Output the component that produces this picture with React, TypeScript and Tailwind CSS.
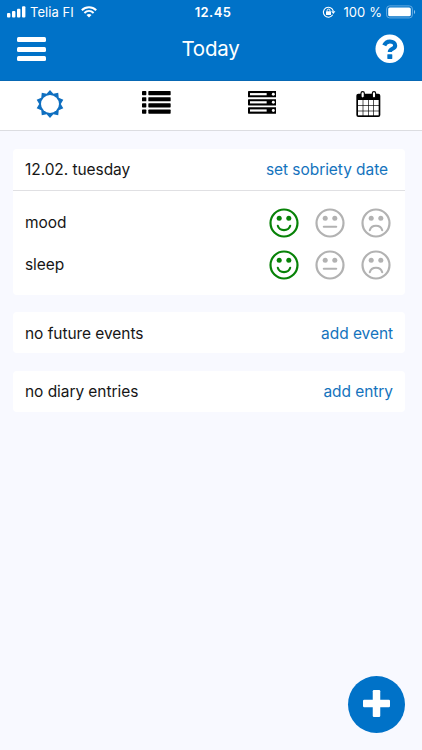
import React from "react";

type Mood = "happy" | "neutral" | "sad";

const mouths: Record<Mood, string> = {
  happy: "M-6.2 2.8C-4.6 8.6 4.6 8.6 6.2 2.8",
  neutral: "M-6.2 3.8H6.2",
  sad: "M-6.2 7.2C-4.6 1.2 4.6 1.2 6.2 7.2",
};

function Face({ mood, active }: { mood: Mood; active?: boolean }) {
  return (
    <svg viewBox="-15 -15 30 30" className={`size-[30px] ${active ? "text-[#078207]" : "text-[#b2b2b2]"}`} fill="none" stroke="currentColor">
      <circle r="13.5" strokeWidth="2.2" />
      <circle cx="-4.8" cy="-4.7" r="2.5" fill="currentColor" stroke="none" />
      <circle cx="4.8" cy="-4.7" r="2.5" fill="currentColor" stroke="none" />
      <path d={mouths[mood]} strokeWidth="2.1" strokeLinecap="round" />
    </svg>
  );
}

function FaceRow({ label }: { label: string }) {
  return (
    <div className="flex h-[42px] items-center justify-between pr-[14px] pl-3">
      <span>{label}</span>
      <div className="flex gap-4">
        <Face mood="happy" active />
        <Face mood="neutral" />
        <Face mood="sad" />
      </div>
    </div>
  );
}

function SunIcon() {
  const points = Array.from({ length: 20 }, (_, i) => {
    const a = (i * Math.PI) / 10 - Math.PI / 2;
    const r = i % 2 ? 10.8 : 14;
    return `${(r * Math.cos(a)).toFixed(2)},${(r * Math.sin(a)).toFixed(2)}`;
  }).join(" ");
  return (
    <svg viewBox="-15 -15 30 30" className="size-[30px]">
      <polygon points={points} fill="#0f6fc0" />
      <circle r="9" fill="white" />
    </svg>
  );
}

function ListIcon() {
  return (
    <svg viewBox="0 0 86 69" className="h-[23px] w-[28.67px]">
      {[0, 18.5, 37, 55.5].map((y) => (
        <g key={y}>
          <rect x="0" y={y} width="13" height="12.5" rx="2" />
          <rect x="19" y={y} width="67" height="12.5" rx="2" />
        </g>
      ))}
    </svg>
  );
}

function ServerIcon() {
  return (
    <svg viewBox="0 0 86 69" className="h-[23px] w-[28.67px]">
      {[0, 24.5, 49].map((y) => (
        <g key={y}>
          <rect x="0" y={y} width="86" height="19" rx="2" />
          <rect x="6" y={y + 6.2} width="50" height="6.6" fill="white" />
          <circle cx="76" cy={y + 9.5} r="4.4" fill="white" />
        </g>
      ))}
    </svg>
  );
}

function CalendarIcon() {
  return (
    <svg viewBox="0 0 74 78" className="h-[26px] w-[24.67px]">
      <rect x="1" y="8" width="72" height="70" rx="6" />
      {[27, 44, 61].map((y) =>
        [6, 22, 38, 54].map((x) => <rect key={`${x}-${y}`} x={x} y={y} width="14" height={y === 61 ? 12 : 15} fill="white" />),
      )}
      {[15, 49].map((x) => (
        <rect key={x} x={x} y="2" width="10" height="19" rx="5" fill="white" stroke="black" strokeWidth="3.5" />
      ))}
    </svg>
  );
}

function StatusBar() {
  return (
    <div className="flex h-6 items-center pr-[6px] pl-[7px] text-[13px] leading-6">
      <div className="flex flex-1 items-center">
        <svg viewBox="0 0 19 12" className="h-3 w-[19px]" fill="white">
          <rect x="0" y="7" width="3.4" height="4.5" rx="1" />
          <rect x="5" y="5" width="3.4" height="6.5" rx="1" />
          <rect x="10" y="2.7" width="3.4" height="8.8" rx="1" />
          <rect x="15" y="0.2" width="3.4" height="11.3" rx="1" />
        </svg>
        <span className="ml-1 tracking-[0.05px]">Telia FI</span>
        <svg viewBox="0 0 16 12" className="ml-[7px] h-3 w-4" fill="none" stroke="white" strokeWidth="2">
          <path d="M.8 4.3C4.9.3 11.1.3 15.2 4.3M3.4 7C6.1 4.4 9.9 4.4 12.6 7" />
          <path d="M8 11.5 5.5 9C6.9 7.7 9.1 7.7 10.5 9Z" fill="white" stroke="none" />
        </svg>
      </div>
      <span className="ml-[3px] font-semibold tracking-[0.4px]">12.45</span>
      <div className="flex flex-1 items-center justify-end">
        <svg viewBox="0 0 14 12" className="mr-[7px] h-3 w-[14px]" fill="none" stroke="white">
          <path d="M10.7 8.8A5 5 0 1 1 11.3 5.2" strokeWidth="1.1" />
          <path d="M9.2 5.2H13.4L11.3 7.9Z" fill="white" stroke="none" />
          <rect x="4" y="5.3" width="5" height="3.6" rx=".5" fill="white" stroke="none" />
          <path d="M5.1 5.5V4.5a1.4 1.4 0 0 1 2.8 0V5.5" />
        </svg>
        <span className="tracking-[0.1px]">100 %</span>
        <svg viewBox="0 0 30 14" className="ml-1 h-[14px] w-[30px]">
          <rect x=".6" y=".9" width="25.8" height="12" rx="3" fill="none" stroke="#65abe2" strokeWidth="1" />
          <rect x="2.2" y="2.5" width="22.6" height="8.8" rx="1.6" fill="white" />
          <path d="M28 5v4c1.5-.5 1.5-3.5 0-4Z" fill="#8fc4ee" />
        </svg>
      </div>
    </div>
  );
}

function EmptyCard({ text, action, className }: { text: string; action: string; className: string }) {
  return (
    <section className={`flex items-center justify-between rounded-[4px] bg-white px-3 pt-[2px] ${className}`}>
      <span>{text}</span>
      <button className="text-[#1473bd]">{action}</button>
    </section>
  );
}

export default function App() {
  return (
    <div className="flex h-[750px] w-[422px] flex-col bg-[#f8f9ff] font-['Inter',sans-serif] text-[15.5px] leading-5 tracking-[-0.06px] text-[#161616]">
      <header className="h-[81px] border-b border-[#0868b4] bg-[#0072c8] text-white">
        <StatusBar />
        <div className="flex h-[50px] items-center justify-between pr-[17.5px] pl-[17px]">
          <button aria-label="Menu" className="flex w-[29px] flex-col gap-[4.4px]">
            <span className="h-[5px] rounded-[1.5px] bg-white" />
            <span className="h-[5px] rounded-[1.5px] bg-white" />
            <span className="h-[5px] rounded-[1.5px] bg-white" />
          </button>
          <h1 className="text-[20.5px] tracking-[-0.2px]">Today</h1>
          <svg viewBox="0 0 512 512" className="size-[29.5px]" fill="white">
            <path d="M504 256c0 136.997-111.043 248-248 248S8 392.997 8 256C8 119.083 119.043 8 256 8s248 111.083 248 248z" />
            <path d="M160 198C176 160 214 130 259 130C312 130 350 158 350 203C350 259 257 254 257 312" fill="none" stroke="#0072c8" strokeWidth="72" />
            <rect x="214" y="350" width="86" height="82" rx="8" fill="#0072c8" />
          </svg>
        </div>
      </header>
      <nav className="grid h-[50px] grid-cols-4 border-b-[1.5px] border-[#dcdde1] bg-white">
        <div className="flex justify-center pt-[7.5px] pr-[6px]"><SunIcon /></div>
        <div className="flex justify-center pt-[10px] pr-[4px]"><ListIcon /></div>
        <div className="flex justify-center pt-[10px] pr-[3.5px]"><ServerIcon /></div>
        <div className="flex justify-center pt-[10px] pr-[2px]"><CalendarIcon /></div>
      </nav>
      <main className="flex flex-1 flex-col pr-[17px] pl-[13px] pt-[18px]">
        <section className="h-[146px] rounded-[4px] bg-white">
          <div className="flex h-[42px] items-center justify-between border-b border-[#e0e0e3] pr-[17px] pl-3">
            <span>12.02. tuesday</span>
            <button className="text-[#1473bd]">set sobriety date</button>
          </div>
          <div className="pt-[10.5px]">
            <FaceRow label="mood" />
            <FaceRow label="sleep" />
          </div>
        </section>
        <EmptyCard text="no future events" action="add event" className="mt-[17px] h-[41px]" />
        <EmptyCard text="no diary entries" action="add entry" className="mt-[17.5px] h-[41px]" />
        <button aria-label="Add" className="mt-auto mb-[17px] flex size-[57px] items-center justify-center self-end rounded-full bg-[#0072c8]">
          <svg viewBox="0 0 27 27" className="mt-[-2px] mr-[1px] size-[27px]" fill="white">
            <rect x="9.75" y="0" width="7.5" height="27" rx="1.2" />
            <rect x="0" y="9.75" width="27" height="7.5" rx="1.2" />
          </svg>
        </button>
      </main>
    </div>
  );
}
